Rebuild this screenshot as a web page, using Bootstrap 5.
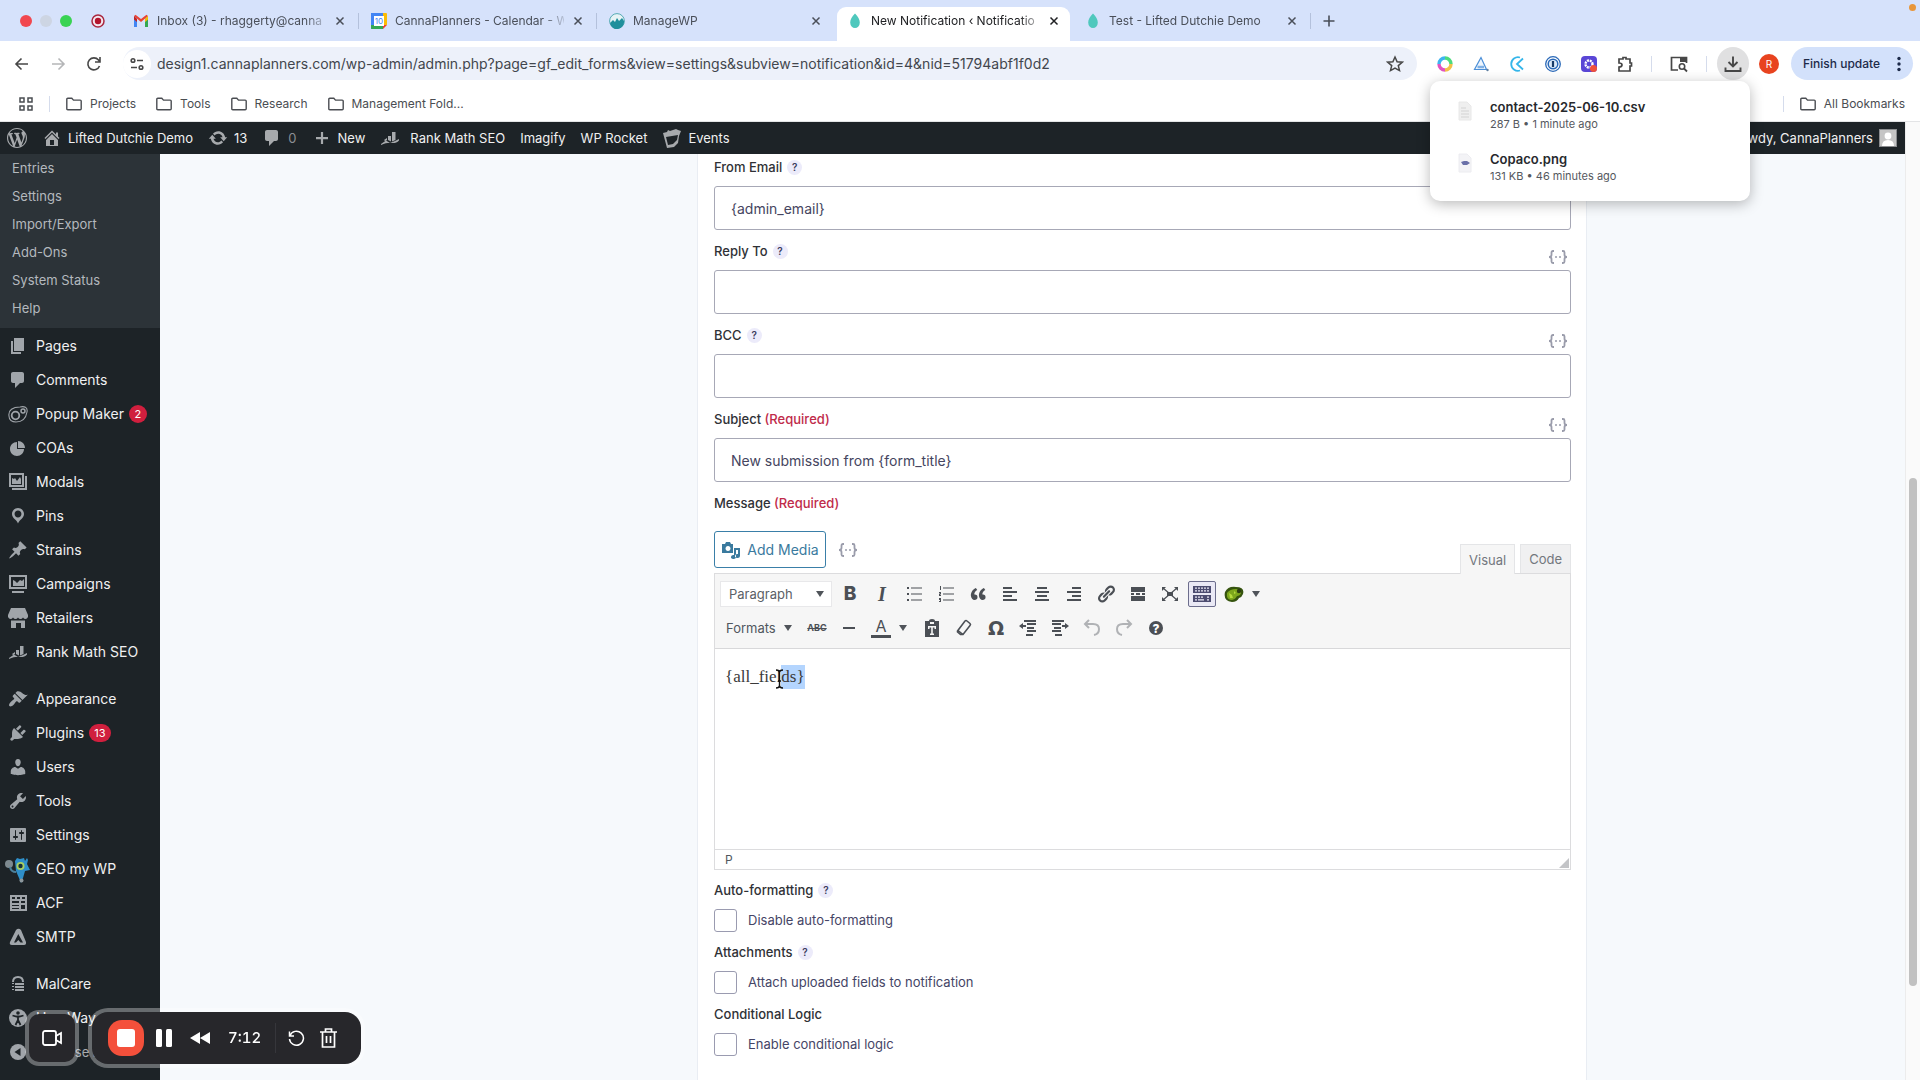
<!DOCTYPE html>
<html lang="en">
<head>
<meta charset="utf-8">
<meta name="viewport" content="width=device-width, initial-scale=1">
<title>New Notification ‹ Notifications</title>
<link href="https://cdn.jsdelivr.net/npm/bootstrap@5.3.0/dist/css/bootstrap.min.css" rel="stylesheet">
<style>
body{font-family:Inter,"Liberation Sans",sans-serif;font-size:13px;line-height:20px;color:#242748;height:100vh;overflow:hidden;background:#fff}
button{font:inherit;color:inherit;background:none;border:0;padding:0}
a{color:inherit;text-decoration:none}
svg{display:block;flex:none}
.ico{width:20px;height:20px;fill:currentColor}
.ln{fill:none;stroke:currentColor}
/* browser tabs */
.tabstrip{height:41px;background:#d6e2fb;padding-left:20px;color:#4a4f59;font-size:12px}
.lamp{width:12px;height:12px;border-radius:50%}
.wintab{width:238px;height:32px;margin-top:9px;padding:0 13px 8px 12px;gap:8px;position:relative}
.wintab::after{content:"";position:absolute;right:0;top:4px;height:16px;width:1px;background:#b4c1dc}
.wintab.nodiv::after{display:none}
.wintab .ttl{flex:1;min-width:0;white-space:nowrap;-webkit-mask-image:linear-gradient(90deg,#000 88%,rgba(0,0,0,.2))}
.wintab.current{z-index:1;color:#202124}
.wintab.current::before{content:"";position:absolute;z-index:-1;left:2px;right:3px;top:-2px;bottom:0;background:#fff;border-radius:9px 9px 0 0}
.tabclose{width:12px}
/* address bar */
.addr{height:47px;padding:6px 7px 8px 12px;color:#474747}
.omni{height:33px;background:#edf1fa;border-radius:17px;padding:0 13px 0 0}
.siteinfo{width:28px;height:28px;border-radius:50%;background:#fff;margin-right:6px}
.omni input{font-size:14px;color:#42464d;background:none;border:0;padding:0;min-width:0;outline:0}
.navico{width:20px}
.vr-s{width:1px;height:16px;background:#d5dcec}
.dl{width:32px;height:33px;border-radius:50%;background:#e0e0e1}
.who{width:20px;height:20px;border-radius:50%;background:#e8431f;color:#fff;font-size:10px}
.finish{height:33px;border-radius:17px;background:#d3e1fb;color:#1d2a49;padding:0 12px;font-weight:500;font-size:12px}
.bmarks{height:34px;padding:0 15px 1px 19px;color:#4a4d52;font-size:12px;border-bottom:1px solid #e3e4e6}
.bmarks a{gap:8px}
/* admin bar */
.abar{height:32px;background:#1d2327;color:#f0f0f1;padding:0 8px 0 7px}
.abar .ico{color:#a7aaad}
.abar a{display:flex;align-items:center;gap:6px;white-space:nowrap}
.avatar{width:18px;height:18px;background:#c5c5c5;border:1px solid #8a8c8f}
/* side menu */
.side{width:160px;background:#1d2327;color:#f0f0f1;font-size:14px}
.sub{background:#2c3338;color:#b4b9be;font-size:13px;height:174px}
.sub a{display:block;height:28px;line-height:28px;padding-left:12px}
.menu{padding-top:1px}
.menu a{display:flex;align-items:center;height:34px;padding-left:8px;gap:8px;white-space:nowrap}
.menu .ico{color:#a0a5aa}
.menu a.gap-top{margin-top:13px}
.count{background:#d01f3e;color:#fff;font-size:11px;line-height:18px;min-width:18px;border-radius:9px;padding:0 5px;text-align:center;margin-left:-3px}
/* form */
.stage{background:#f6f9fc}
.navcol{flex:0 0 537px}
.sheet{background:#fff;border:1px solid #e9edf3;border-width:0 1px;padding:0 15px 60px 16px;margin-right:318px;min-width:0}
.lab{font-weight:500;color:#2f3136;padding:11px 0 9px}
.first .lab{padding-top:3px}
.req{color:#c02b4a}
.tip{width:15px;height:15px;border-radius:50%;background:#ecebfa;color:#3b3b5c;font-size:10px;font-weight:600;line-height:15px;text-align:center;margin-left:5px}
.tip.far{margin-left:5px}
.mt{color:#9a9cab;margin:0 3px 6px 0}
.sheet input.form-control{height:44px;border:1px solid #a7a8b6;border-radius:3px;padding:0 16px;font-size:14px;color:#454560;box-shadow:none}
.media{width:112px;height:37px;border:1px solid #3a7fa8;border-radius:3px;color:#3a7a9e;font-size:14px;white-space:nowrap;gap:6px}
.edtab{height:29px;border:1px solid #e4e5e7;border-bottom:0;background:#f0f0f1;color:#73777d;padding:0 8px}
.edtab.on{background:#f6f6f6;height:30px;margin-bottom:-1px;z-index:1;position:relative}
.ed{border:1px solid #dcdcde}
.tools{background:#f6f6f6;border-bottom:1px solid #d8d8da;padding:7px 5px;color:#50575e}
.tools .rw{height:26px;gap:4px}
.tb{width:28px;height:26px;display:flex;align-items:center;justify-content:center;color:#4b4f55}
.tb.on{border:1px solid #6c6d8c;background:#eae9f5;border-radius:2px;color:#4c4c70}
.pick{width:112px;height:26px;background:#fff;border:1px solid #e8e8ea;color:#5b5f66;padding:0 7px 0 8px}
.pick select{appearance:none;border:0;background:none;color:inherit;font:inherit;padding:0;outline:0;width:100%}
.caret{width:0;height:0;border:4px solid transparent;border-top:6px solid #50545a;border-bottom:0;flex:none}
.bb{font-size:19px;font-weight:800}
.ii{font:italic 700 20px "Liberation Serif",serif}
.abc{font-size:9px;font-weight:700;text-decoration:line-through}
.aa{font-size:16px;line-height:17px;border-bottom:3px solid #4b4f55;width:20px}
.om{font:700 19px "DejaVu Sans",sans-serif}
.split{width:47px}
.page{height:200px;padding:16px 10px;font:17px/24px "Liberation Serif",serif;color:#3a3a3a;outline:0;position:relative}
.seld{background:#b4d5fe;display:inline-block}
.ibeam{position:absolute;left:60px;top:20px}
.stat{height:20px;border-top:1px solid #dcdcde;font-size:12px;line-height:19px;color:#50575e;padding-left:10px}
.chk .lab{padding:10px 0 8px}
.chk .form-check{height:24px;min-height:0;margin:0;padding:0;gap:11px;color:#454566}
.chk .form-check-input{width:23px;height:23px;margin:0;float:none;border:1px solid #9a9bb0;border-radius:3px}
.sbar{width:15px;background:#fafafa;border-left:1px solid #ececec;padding:356px 3px 0}
.thumb{height:508px;width:8px;border-radius:4px;background:#c1c1c1}
/* overlays */
.pop{position:absolute;right:170px;top:81px;width:320px;height:120px;background:#fff;border-radius:10px;box-shadow:0 3px 14px rgba(0,0,0,.28);padding:16px 26px;color:#27292d;z-index:5}
.pop .nm{font-size:13px;font-weight:600;line-height:20px}
.pop .dt{font-size:11px;line-height:15px;color:#55585e}
.pop .it{height:52px;gap:16px}
.rec{position:fixed;bottom:16px;height:52px;background:#27272b;color:#fff;box-shadow:0 0 0 4px rgba(255,255,255,.33);z-index:6}
.cam{left:29px;width:46px;height:48px;bottom:18px;border-radius:10px}
.deck{left:92px;width:269px;border-radius:16px;padding-left:16px}
.stop{width:36px;height:36px;border-radius:14px;background:#f4503b}
.stop i{width:18px;height:18px;border-radius:3px;background:#fff}
.clock{font-size:15px;font-weight:500;font-variant-numeric:tabular-nums}
</style>
</head>
<body class="d-flex flex-column">
<svg class="position-absolute" width="0" height="0">
<symbol id="x" viewBox="0 0 12 12"><path d="M2.500 2.500l7 7M9.500 2.500l-7 7" stroke="currentColor" stroke-width="1.500"/></symbol>
<symbol id="drop" viewBox="0 0 16 16"><path d="M8 .5C5 3.500 3.200 6.500 3.200 9.500a4.800 5.500 0 0 0 9.600 0C12.800 6.500 11 3.500 8 .5z" fill="#4fc8bd"/></symbol>
<symbol id="fold" viewBox="0 0 16 16"><path d="M.8 3.200q0-1 1-1h4l1.700 1.900h6.700q1 0 1 1v7.700q0 1-1 1H1.800q-1 0-1-1z" fill="none" stroke="currentColor" stroke-width="1.400"/></symbol>
<symbol id="rm" viewBox="0 0 20 20"><path d="M1 16l5-3.500 4 2.500 5-2 4-2v1.500c-1.500 2-4 2.500-6 2.500-4 0-7-.5-12 2zM4 12l3-2v2l-2 1zm4-4h3v5.500l-3-1.500zm4-4h3.500v8l-3.500 1.500z"/></symbol>
<symbol id="mtag" viewBox="0 0 20 14"><g fill="none" stroke="currentColor" stroke-width="1.800"><path d="M6 1H5Q3.500 1 3.500 2.500V5Q3.500 7 1 7q2.500 0 2.500 2v2.500Q3.500 13 5 13h1M14 1h1q1.500 0 1.500 1.500V5q0 2 2.500 2-2.500 0-2.500 2v2.500q0 1.500-1.500 1.500h-1"/></g><circle cx="8" cy="7" r="1" fill="currentColor"/><circle cx="12" cy="7" r="1" fill="currentColor"/></symbol>
<symbol id="cmt" viewBox="0 0 20 20"><path d="M5 2h9c1.100 0 2 .9 2 2v7c0 1.100-.9 2-2 2h-2l-5 5v-5H5c-1.100 0-2-.9-2-2V4c0-1.100.9-2 2-2z"/></symbol>
</svg>

<header>
<div class="tabstrip d-flex">
  <div class="d-flex align-items-center" style="width:101px">
    <span class="lamp me-2" style="background:#f1474f"></span><span class="lamp me-2" style="background:#cdd5e3"></span><span class="lamp" style="background:#39d353"></span>
    <svg class="ms-auto me-3" width="14" height="14" viewBox="0 0 14 14"><circle cx="7" cy="7" r="6" fill="#f3e8f0" stroke="#a9283f" stroke-width="1.500"/><circle cx="7" cy="7" r="3.200" fill="#b3142c"/></svg>
  </div>
  <div class="wintab d-flex align-items-center"><svg width="16" height="16" viewBox="0 0 16 16"><path d="M1 3v11h3V6z" fill="#4285f4"/><path d="M15 3v11h-3V6z" fill="#34a853"/><path d="M1 3l7 6 7-6-1.500-1.200L8 6 2.500 1.800z" fill="#ea4335"/><path d="M1 3l3 3v3L1 6.500z" fill="#c5221f"/><path d="M15 3l-3 3v3l3-2.500z" fill="#fbbc04"/></svg><span class="ttl">Inbox (3) - rhaggerty@canna</span><button class="tabclose" aria-label="Close"><svg width="12" height="12"><use href="#x"/></svg></button></div>
  <div class="wintab d-flex align-items-center"><svg width="16" height="16" viewBox="0 0 16 16"><path d="M0 0h12v4H4v12H0z" fill="#4285f4"/><path d="M12 0h3q1 0 1 1v11h-4z" fill="#fbbc04"/><path d="M0 12h12v4H1q-1 0-1-1z" fill="#34a853"/><path d="M12 12h4l-4 4z" fill="#ea4335"/><path d="M3 3h10v10H3z" fill="#fff"/><text x="8" y="11" font-size="8" text-anchor="middle" fill="#4285f4">10</text></svg><span class="ttl">CannaPlanners - Calendar - W</span><button class="tabclose" aria-label="Close"><svg width="12" height="12"><use href="#x"/></svg></button></div>
  <div class="wintab nodiv d-flex align-items-center"><svg width="16" height="16" viewBox="0 0 16 16"><circle cx="8" cy="8" r="7.400" fill="#e6f3f5" stroke="#55aab4"/><path d="M1 10l3-3 2 2 2-4 2 3 3-3 2 3a7 7 0 0 1-14 2z" fill="#1f8f9c"/></svg><span class="ttl">ManageWP</span><button class="tabclose" aria-label="Close"><svg width="12" height="12"><use href="#x"/></svg></button></div>
  <div class="wintab current nodiv d-flex align-items-center"><svg width="16" height="16"><use href="#drop"/></svg><span class="ttl">New Notification ‹ Notificatio</span><button class="tabclose" aria-label="Close"><svg width="12" height="12"><use href="#x"/></svg></button></div>
  <div class="wintab d-flex align-items-center"><svg width="16" height="16"><use href="#drop"/></svg><span class="ttl">Test - Lifted Dutchie Demo</span><button class="tabclose" aria-label="Close"><svg width="12" height="12"><use href="#x"/></svg></button></div>
  <button class="px-2 ms-1" aria-label="New tab"><svg width="12" height="12" viewBox="0 0 12 12"><path d="M6 .5v11M.5 6h11" stroke="currentColor" stroke-width="1.600"/></svg></button>
  <span class="ms-auto rounded-circle mt-1 me-1" style="width:7px;height:7px;background:#e8963a"></span>
</div>
<div class="addr d-flex align-items-center">
  <div class="d-flex align-items-center gap-3" style="width:111px">
    <button class="navico" aria-label="Back"><svg width="20" height="20" viewBox="0 0 20 20" class="ln" stroke-width="1.600"><path d="M16 10H4M9.500 4.500L4 10l5.500 5.500"/></svg></button>
    <button class="navico" style="color:#b5b6b8" aria-label="Forward"><svg width="20" height="20" viewBox="0 0 20 20" class="ln" stroke-width="1.600"><path d="M4 10h12M10.500 4.500L16 10l-5.500 5.500"/></svg></button>
    <button class="navico" aria-label="Reload"><svg width="20" height="20" viewBox="0 0 20 20" class="ln" stroke-width="1.600"><path d="M15.500 12A6 6 0 1 1 14.500 6l1 1.200M16 3v5h-5"/></svg></button>
  </div>
  <div class="omni d-flex align-items-center flex-grow-1">
    <span class="siteinfo d-flex align-items-center justify-content-center"><svg width="16" height="16" viewBox="0 0 16 16" class="ln" stroke-width="1.600"><circle cx="4" cy="4.500" r="1.800"/><path d="M8 4.500h6M2 11.500h6"/><circle cx="12" cy="11.500" r="1.800"/></svg></span>
    <input class="flex-grow-1" aria-label="Address" value="design1.cannaplanners.com/wp-admin/admin.php?page=gf_edit_forms&amp;view=settings&amp;subview=notification&amp;id=4&amp;nid=51794abf1f0d2">
    <button aria-label="Bookmark"><svg width="18" height="18" viewBox="0 0 18 18" class="ln" stroke-width="1.500"><path d="M9 2l2.100 4.700 5.100.5-3.900 3.400 1.200 5L9 13l-4.500 2.600 1.200-5L1.800 7.200l5.100-.5z"/></svg></button>
  </div>
  <div class="d-flex align-items-center" style="margin-left:20px;gap:20px">
    <svg width="16" height="16" viewBox="0 0 16 16" fill="none" stroke-width="3.400"><path d="M8 2a6 6 0 0 1 6 6" stroke="#4ddb7d"/><path d="M14 8a6 6 0 0 1-6 6" stroke="#f2c14a"/><path d="M8 14a6 6 0 0 1-6-6" stroke="#e254c0"/><path d="M2 8a6 6 0 0 1 6-6" stroke="#3eb4f0"/></svg>
    <svg width="16" height="16" viewBox="0 0 16 16"><path d="M8 1.500L1.500 13.500h12z" fill="#eef5fd" stroke="#4b8fd8" stroke-width="1.200"/><path d="M4.500 11h6.500" stroke="#7fb0e4" stroke-width="2.500"/><circle cx="14.500" cy="14" r="1.200" fill="#5f7fa0"/></svg>
    <svg width="16" height="16" viewBox="0 0 16 16" fill="none" stroke="#35b6ea" stroke-width="1.800"><path d="M11 1.500A6.800 6.800 0 1 0 11 14.500M14 2.500L8 8l6 5.500"/></svg>
    <svg width="16" height="16" viewBox="0 0 16 16"><circle cx="8" cy="8" r="7.300" fill="#fff" stroke="#2a69b8" stroke-width="1.300"/><circle cx="8" cy="8" r="4.800" fill="#dbe9f8" stroke="#2a69b8" stroke-width="1.500"/><path d="M8 5v6" stroke="#173a66" stroke-width="2.200"/></svg>
    <svg width="16" height="16" viewBox="0 0 16 16"><rect width="16" height="16" rx="4" fill="#5a46d6"/><circle cx="8" cy="8" r="3.500" fill="none" stroke="#fff" stroke-width="2.400" stroke-dasharray="2 .8"/><circle cx="12.500" cy="12.500" r="3.500" fill="#f0503c"/></svg>
    <svg width="16" height="16" viewBox="0 0 16 16" class="ln" stroke-width="1.700"><path d="M2 3h4V1.500h3V3h4v4h1.500v3H13v5H2v-4q3 0 3-2t-3-2z"/></svg>
  </div>
  <div class="d-flex align-items-center" style="margin-left:18px"><span class="vr-s"></span><svg style="margin:0 18px" width="18" height="18" viewBox="0 0 18 18"><path d="M8 15H1.500V2.500h15V8" fill="none" stroke="currentColor" stroke-width="1.700"/><path d="M10 2h7v5h-7z" fill="currentColor"/><circle cx="12" cy="11.500" r="2.700" fill="none" stroke="currentColor" stroke-width="1.600"/><path d="M14 13.500l3 3" stroke="currentColor" stroke-width="1.800"/></svg><span class="vr-s"></span></div>
  <button class="dl d-flex align-items-center justify-content-center" style="margin:0 10px" aria-label="Downloads"><svg width="18" height="18" viewBox="0 0 18 18" class="ln" stroke-width="1.900"><path d="M9 1.500v9.500M4.500 7L9 11.500 13.500 7M1.500 12.500v3.500h15v-3.500"/></svg></button>
  <span class="who d-flex align-items-center justify-content-center me-2">R</span>
  <button class="finish d-flex align-items-center justify-content-between text-nowrap" style="width:122px;margin-left:4px">Finish update<svg width="4" height="16" viewBox="0 0 4 16" fill="currentColor"><circle cx="2" cy="2.500" r="1.700"/><circle cx="2" cy="8" r="1.700"/><circle cx="2" cy="13.500" r="1.700"/></svg></button>
</div>
<nav class="bmarks d-flex align-items-center">
  <svg width="14" height="14" viewBox="0 0 14 14" class="ln" stroke-width="1.500"><path d="M1 1h4v4H1zM9 1h4v4H9zM1 9h4v4H1zM9 9h4v4H9z"/></svg>
  <span class="vr-s mx-3"></span>
  <div class="d-flex" style="gap:20px">
  <a href="#" class="d-flex align-items-center"><svg width="16" height="16"><use href="#fold"/></svg>Projects</a>
  <a href="#" class="d-flex align-items-center"><svg width="16" height="16"><use href="#fold"/></svg>Tools</a>
  <a href="#" class="d-flex align-items-center"><svg width="16" height="16"><use href="#fold"/></svg>Research</a>
  <a href="#" class="d-flex align-items-center"><svg width="16" height="16"><use href="#fold"/></svg>Management Fold...</a>
  </div>
  <span class="vr-s ms-auto me-3"></span>
  <a href="#" class="d-flex align-items-center"><svg width="16" height="16"><use href="#fold"/></svg>All Bookmarks</a>
</nav>
</header>

<div class="pop">
  <div class="it d-flex"><svg class="mt-1" width="18" height="20" viewBox="0 0 18 20"><path d="M3 1h8l4 4v14H3z" fill="#efefef" stroke="#e8e8e8"/><path d="M5 7h5M5 10h8M5 13h8M5 16h8" stroke="#d3d3d3"/></svg><div><div class="nm">contact-2025-06-10.csv</div><div class="dt">287 B • 1 minute ago</div></div></div>
  <div class="it d-flex"><svg class="mt-1" width="18" height="20" viewBox="0 0 18 20"><path d="M3 1h8l4 4v14H3z" fill="#f3f3f6" stroke="#ececf0"/><path d="M5 9l3-1h3l3 2-3 2H7z" fill="#6a70a8"/></svg><div><div class="nm">Copaco.png</div><div class="dt">131 KB • 46 minutes ago</div></div></div>
</div>

<div class="d-flex flex-grow-1 overflow-hidden">
<div class="d-flex flex-column flex-grow-1 overflow-hidden">
<nav class="abar d-flex align-items-center flex-shrink-0">
  <a href="#" aria-label="WordPress"><svg class="ico" viewBox="0 0 20 20"><path d="M20 10c0-5.510-4.490-10-10-10C4.480 0 0 4.490 0 10c0 5.520 4.480 10 10 10 5.510 0 10-4.480 10-10zM7.780 15.370L4.370 6.220c.55-.02 1.170-.08 1.170-.08.5-.06.44-1.130-.06-1.110 0 0-1.450.11-2.370.11-.18 0-.37 0-.58-.01C4.120 2.690 6.870 1.110 10 1.110c2.330 0 4.450.87 6.050 2.340-.68-.11-1.650.39-1.650 1.580 0 .74.45 1.360.9 2.100.35.61.55 1.360.55 2.460 0 1.490-1.400 5-1.400 5l-3.030-8.370c.54-.02.82-.17.82-.17.5-.05.44-1.250-.06-1.220 0 0-1.440.12-2.380.12-.87 0-2.330-.12-2.330-.12-.5-.03-.56 1.200-.06 1.220l.92.08 1.260 3.410zM17.410 10c.24-.64.74-1.870.43-4.250.7 1.290 1.050 2.710 1.050 4.250 0 3.290-1.730 6.240-4.400 7.780.97-2.590 1.940-5.200 2.920-7.780zM6.100 18.090C3.120 16.650 1.110 13.530 1.110 10c0-1.300.23-2.480.72-3.590C3.250 10.300 4.670 14.200 6.100 18.090zm4.030-6.630l2.580 6.980c-.86.29-1.760.45-2.710.45-.79 0-1.570-.11-2.290-.33.81-2.380 1.620-4.740 2.420-7.100z"/></svg></a>
  <div class="d-flex flex-grow-1" style="margin-left:15px;gap:15px">
  <a href="#"><svg class="ico" viewBox="0 0 20 20"><path d="M16 8.500l1.530 1.530-1.060 1.060L10 4.600l-6.470 6.490-1.060-1.060L10 2.500l4 4v-2h2v4zm-6-2.460l6 5.990V18H4v-5.970zM12 17v-5H8v5h4z" fill-rule="evenodd"/></svg>Lifted Dutchie Demo</a>
  <a href="#"><svg class="ico" viewBox="0 0 20 20"><path d="M10.200 3.280c3.530 0 6.430 2.610 6.920 6h2.080l-3.500 4-3.500-4h2.320c-.45-1.970-2.210-3.450-4.320-3.450-1.450 0-2.730.71-3.540 1.780L4.950 5.660C6.230 4.200 8.110 3.280 10.200 3.280zm-.4 13.440c-3.520 0-6.430-2.610-6.920-6H.8l3.500-4 3.500 4H5.480c.45 1.970 2.210 3.450 4.320 3.450 1.450 0 2.730-.71 3.540-1.780l1.710 1.950c-1.280 1.460-3.150 2.380-5.250 2.380z"/></svg>13</a>
  <a href="#" style="color:#8b8f94"><svg class="ico"><use href="#cmt"/></svg>0</a>
  <a href="#"><svg class="ico" viewBox="0 0 20 20"><path d="M16 9v2.200h-4.900V16H8.900v-4.800H4V9h4.900V4h2.200v5z"/></svg>New</a>
  <a href="#"><svg class="ico me-1"><use href="#rm"/></svg>Rank Math SEO</a>
  <a href="#">Imagify</a>
  <a href="#">WP Rocket</a>
  <a href="#"><svg class="ico" viewBox="0 0 20 20"><path d="M1 5l4-1 1-2 2 1 6-2 2 1 3 1-2 5-1 7-4 4-7 1zm3 4l2 8 5-1 4-4 1-5z" fill-rule="evenodd"/></svg>Events</a>
  </div>
  <a href="#">Howdy, CannaPlanners<span class="avatar"><svg width="16" height="16" viewBox="0 0 16 16" fill="#fff"><circle cx="8" cy="6" r="3.400"/><path d="M2 16q0-6 6-6t6 6z"/></svg></span></a>
</nav>
<div class="d-flex flex-grow-1 overflow-hidden">
<aside class="side flex-shrink-0">
  <div class="sub"><a href="#">Entries</a><a href="#">Settings</a><a href="#">Import/Export</a><a href="#">Add-Ons</a><a href="#">System Status</a><a href="#">Help</a></div>
  <nav class="menu">
  <a href="#"><svg class="ico" viewBox="0 0 20 20"><path d="M6 15V2h10v13H6zm-1 1h8v2H3V5h2v11z"/></svg>Pages</a>
  <a href="#"><svg class="ico"><use href="#cmt"/></svg>Comments</a>
  <a href="#"><svg class="ico ln" viewBox="0 0 20 20" stroke-width="1.100" style="fill:none"><path d="M1 12C0 6 5 3 12 3c4-1 8 0 7 5-1 6-5 10-11 10-4 0-7-2-7-6z"/><circle cx="7.500" cy="11.500" r="3.800" stroke-width="1.800"/><circle cx="15" cy="7" r="2" stroke-width="1.500"/></svg>Popup Maker<span class="count">2</span></a>
  <a href="#"><svg class="ico" viewBox="0 0 20 20"><path d="M10 10V3c3.870 0 7 3.130 7 7h-7zM9 4v7h7c0 3.870-3.130 7-7 7s-7-3.130-7-7 3.130-7 7-7z"/></svg>COAs</a>
  <a href="#"><svg class="ico" viewBox="0 0 20 20"><path d="M1 1h15v14H1zm2 2v10h11V3zM17 4h2v14H4v-2h13zM4 6l2 1 1-1 2 3 3-4 1 2v5H4z" fill-rule="evenodd"/></svg>Modals</a>
  <a href="#"><svg class="ico" viewBox="0 0 20 20"><path d="M10 2C6.690 2 4 4.690 4 8c0 2.020 1.170 3.710 2.530 4.890.43.37 1.180.96 1.850 1.830.74.97 1.410 2.010 1.620 2.710.21-.7.88-1.740 1.620-2.710.67-.87 1.420-1.460 1.850-1.830C14.830 11.710 16 10.020 16 8c0-3.310-2.690-6-6-6zm0 2.560c1.900 0 3.440 1.540 3.440 3.440S11.900 11.440 10 11.440 6.560 9.900 6.560 8 8.100 4.560 10 4.560z" fill-rule="evenodd"/></svg>Pins</a>
  <a href="#"><svg class="ico" viewBox="0 0 20 20"><path d="M10.440 3.020l1.820-1.820 6.360 6.350-1.830 1.820c-1.050-.68-2.480-.57-3.410.36l-.75.75c-.92.93-1.040 2.350-.35 3.410l-1.830 1.820-2.410-2.410-2.800 2.790c-.42.42-3.380 2.710-3.800 2.290s1.860-3.390 2.280-3.810l2.790-2.790L4.100 9.360l1.830-1.820c1.050.69 2.480.57 3.400-.36l.75-.75c.93-.92 1.050-2.350.36-3.410z"/></svg>Strains</a>
  <a href="#"><svg class="ico" viewBox="0 0 20 20"><path d="M1 1h18v14H1zm2 2v10h14V3zM4 17h12v2H4zM5 6l2 1 2 2 3-3 2 1 2-2v7H5z" fill-rule="evenodd"/></svg>Campaigns</a>
  <a href="#"><svg class="ico" viewBox="0 0 20 20"><path d="M3 0h14l3 7v2q-1 2-2.500 2T15 9.500Q14 11 12.500 11T10 9.500Q9 11 7.500 11T5 9.500Q4 11 2.500 11T0 9V7zM3 12.500h14V20h-4v-5H8v5H3z"/></svg>Retailers</a>
  <a href="#"><svg class="ico"><use href="#rm"/></svg>Rank Math SEO</a>
  <a href="#" class="gap-top"><svg class="ico" viewBox="0 0 20 20"><path d="M14.480 11.060L7.410 3.990l1.500-1.500c.5-.56 2.300-.47 3.510.32 1.210.8 1.430 1.280 2.910 2.100 1.180.64 2.450 1.260 4.450.85zm-.71.71L6.700 4.700 4.930 6.470c-.39.39-.39 1.020 0 1.410l1.060 1.060c.39.39.39 1.030 0 1.420-.6.6-1.430 1.110-2.210 1.690-.35.26-.7.53-1.010.84C1.430 14.230.4 16.080 1.400 17.070c.99 1 2.840-.03 4.180-1.360.31-.31.58-.66.85-1.020.57-.78 1.080-1.610 1.690-2.210.39-.39 1.020-.39 1.410 0l1.060 1.060c.39.39 1.020.39 1.410 0z"/></svg>Appearance</a>
  <a href="#"><svg class="ico" viewBox="0 0 20 20"><path d="M13.110 4.360L9.870 7.600 8 5.730l3.240-3.240c.35-.34 1.050-.2 1.560.32.52.51.66 1.210.31 1.550zm-8 1.770l.91-1.120 9.010 9.010-1.190.84c-.71.71-2.630 1.160-3.820 1.160H6.140L4.900 17.260c-.59.59-1.540.59-2.120 0-.59-.58-.59-1.530 0-2.120l1.240-1.240v-3.880c0-1.130.4-3.190 1.090-3.890zm7.260 3.970l3.240-3.240c.34-.35 1.040-.21 1.550.31.52.51.66 1.210.31 1.550l-3.240 3.250z"/></svg>Plugins<span class="count">13</span></a>
  <a href="#"><svg class="ico" viewBox="0 0 20 20"><path d="M10 9.250c-2.270 0-2.730-3.440-2.730-3.440C7 4.020 7.820 2 9.970 2c2.160 0 2.980 2.020 2.710 3.810 0 0-.41 3.440-2.680 3.440zm0 2.570L12.720 10c2.390 0 4.520 2.330 4.520 4.530v2.490s-3.650 1.130-7.240 1.130c-3.650 0-7.240-1.130-7.240-1.130v-2.490c0-2.250 1.940-4.480 4.470-4.480z"/></svg>Users</a>
  <a href="#"><svg class="ico" viewBox="0 0 20 20"><path d="M16.680 9.770c-1.340 1.340-3.300 1.670-4.950.99l-5.410 6.520c-.99.99-2.590.99-3.580 0s-.99-2.590 0-3.570l6.520-5.420c-.68-1.650-.35-3.610.99-4.950 1.280-1.280 3.120-1.620 4.720-1.060l-2.890 2.890 2.820 2.820 2.860-2.870c.53 1.580.18 3.390-1.080 4.650zM3.810 16.210c.4.39 1.040.39 1.430 0 .4-.4.4-1.040 0-1.430-.39-.4-1.030-.4-1.430 0-.39.39-.39 1.030 0 1.430z" fill-rule="evenodd"/></svg>Tools</a>
  <a href="#"><svg class="ico" viewBox="0 0 20 20"><path fill-rule="evenodd" d="M18 16V4c0-.55-.45-1-1-1H3c-.55 0-1 .45-1 1v12c0 .55.45 1 1 1h14c.55 0 1-.45 1-1zM8 11h1c.55 0 1 .45 1 1s-.45 1-1 1H8v1.500c0 .28-.22.5-.5.5s-.5-.22-.5-.5V13H6c-.55 0-1-.45-1-1s.45-1 1-1h1V5.500c0-.28.22-.5.5-.5s.5.22.5.5V11zm5-2h-1c-.55 0-1-.45-1-1s.45-1 1-1h1V5.500c0-.28.22-.5.5-.5s.5.22.5.5V7h1c.55 0 1 .45 1 1s-.45 1-1 1h-1v5.500c0 .28-.22.5-.5.5s-.5-.22-.5-.5V9z"/></svg>Settings</a>
  <a href="#"><svg class="ico" style="overflow:visible" viewBox="0 0 20 20"><circle cx="1" cy="5" r="4" fill="#7e8a90"/><path d="M2 8q1 5 6 5" fill="none" stroke="#4c7f99" stroke-width="2"/><path d="M7 2l2-3 3 1 4-1 1 3 2-3 1 2-1 4 3 6-5 1-2 7-2 5-2-5-3-7z" fill="#2f8fc9"/><circle cx="12.500" cy="7" r="4" fill="#a9cf62"/><circle cx="12.500" cy="7" r="2.200" fill="#16313f"/><circle cx="13.500" cy="21.500" r="2" fill="#8d979c"/></svg>GEO my WP</a>
  <a href="#"><svg class="ico" viewBox="0 0 20 20"><path d="M2 2h17v16H2zm2 2v2h3V4zm5 0v2h3V4zm5 0v2h3V4zM4 8v2h7V8zm0 4v1h7v-1zm0 3v1h7v-1zm9-7v2h4V8zm0 4v4h4v-4z" fill-rule="evenodd"/></svg>ACF</a>
  <a href="#"><svg class="ico" viewBox="0 0 20 20"><path d="M8 3q2.500-2.500 5 0l5 12q.5 3-2 3H4q-3 0-2-3zm2.300 4L6 15.500h2l2.300-2.500 2.200 2.500H15z" fill-rule="evenodd"/></svg>SMTP</a>
  <a href="#" class="gap-top"><svg class="ico" viewBox="0 0 20 20"><path d="M4 8q0-6 6-6t6 6h-2q0-4-4-4T6 8zM7 9h9v2H7zm0 3h9v2H7zm0 3h9v2H7zM4 9h2v1H4zm0 3h2v1H4zm0 3h2v1H4z"/></svg>MalCare</a>
  <a href="#"><svg class="ico" viewBox="0 0 20 20"><circle cx="10" cy="10" r="9"/><g stroke="#1d2327" stroke-width="1.800" fill="none"><path d="M4.500 7.500l4 1h3l4-1M10 9v3l-2.500 5M10 12l2.500 5"/></g><circle cx="10" cy="5" r="1.800" fill="#1d2327"/></svg>UserWay</a>
  <a href="#" style="font-size:13px;color:#a7aaad"><svg class="ico" viewBox="0 0 20 20"><circle cx="10" cy="10" r="8"/><path d="M12.500 6v8l-6-4z" fill="#1d2327"/></svg>Collapse menu</a>
  </nav>
</aside>

<main class="stage d-flex flex-grow-1 align-items-start overflow-hidden">
<div class="navcol"></div>
<form class="sheet flex-grow-1" onsubmit="return false">
  <div class="first">
    <div class="d-flex align-items-center"><label class="lab d-flex align-items-center" for="f1">From Email<span class="tip">?</span></label></div>
    <input class="form-control" id="f1" value="{admin_email}">
  </div>
  <div>
    <div class="d-flex align-items-end justify-content-between"><label class="lab d-flex align-items-center" for="f2">Reply To<span class="tip">?</span></label><button class="mt" aria-label="Merge tags"><svg width="20" height="14"><use href="#mtag"/></svg></button></div>
    <input class="form-control" id="f2">
  </div>
  <div>
    <div class="d-flex align-items-end justify-content-between"><label class="lab d-flex align-items-center" for="f3">BCC<span class="tip">?</span></label><button class="mt" aria-label="Merge tags"><svg width="20" height="14"><use href="#mtag"/></svg></button></div>
    <input class="form-control" id="f3">
  </div>
  <div>
    <div class="d-flex align-items-end justify-content-between"><label class="lab" for="f4">Subject <span class="req">(Required)</span></label><button class="mt" aria-label="Merge tags"><svg width="20" height="14"><use href="#mtag"/></svg></button></div>
    <input class="form-control" id="f4" value="New submission from {form_title}">
  </div>
  <div class="lab" id="msg">Message <span class="req">(Required)</span></div>
  <div class="d-flex align-items-end" style="height:51px">
    <div class="d-flex align-items-center" style="margin-bottom:5px">
      <button class="media d-flex align-items-center justify-content-center"><svg class="ico" viewBox="0 0 20 20"><path d="M1 4h3l1-2h4l1 2h2v9H1zm6 2a2.500 2.500 0 1 0 .01 0zM13 8h6v8a2.500 2 0 1 1-2-2v-4h-2v7a2.500 2 0 1 1-2-2z" fill-rule="evenodd"/></svg>Add Media</button>
      <button class="ms-2 ps-1" aria-label="Merge tags" style="color:#9a9cab"><svg width="20" height="14"><use href="#mtag"/></svg></button>
    </div>
    <div class="d-flex align-items-end ms-auto" style="gap:5px"><button class="edtab on">Visual</button><button class="edtab">Code</button></div>
  </div>
  <div class="ed">
    <div class="tools">
      <div class="rw d-flex mb-2">
        <div class="pick d-flex align-items-center"><select aria-label="Block format"><option>Paragraph</option></select><span class="caret"></span></div>
        <button class="tb bb">B</button>
        <button class="tb ii">I</button>
        <button class="tb" aria-label="Bulleted list"><svg class="ico" viewBox="0 0 20 20"><path d="M3 3h2v2H3zm0 6h2v2H3zm0 6h2v2H3zM7 3.500h11v1H7zm0 6h11v1H7zm0 6h11v1H7z"/></svg></button>
        <button class="tb" aria-label="Numbered list"><svg class="ico" viewBox="0 0 20 20"><path d="M7 3.500h11v1H7zm0 6h11v1H7zm0 6h11v1H7zM4 2h1v4H4zm-1 6h2v2l-1 1h1v1H3v-2l1-1H3zm0 6h2v4H3v-1h1v-1H3z"/></svg></button>
        <button class="tb" aria-label="Quote"><svg class="ico" viewBox="0 0 20 20"><path d="M9.490 13.220c0-.74-.2-1.380-.61-1.900-.62-.78-1.830-.88-2.530-.72-.29-1.650 1.110-3.750 2.920-4.650L7.880 4c-2.730 1.300-5.420 4.280-4.960 8.050C3.210 14.430 4.590 16 6.540 16c.85 0 1.560-.25 2.120-.75s.83-1.180.83-2.030zm8.050 0c0-.74-.2-1.380-.61-1.900-.63-.78-1.830-.88-2.530-.72-.29-1.650 1.110-3.750 2.920-4.650L15.930 4c-2.730 1.300-5.410 4.280-4.950 8.050.29 2.380 1.660 3.950 3.610 3.950.85 0 1.560-.25 2.120-.75s.83-1.180.83-2.030z"/></svg></button>
        <button class="tb" aria-label="Align left"><svg class="ico" viewBox="0 0 20 20"><path d="M3 3h9v2H3zm0 4h14v2H3zm0 4h9v2H3zm0 4h14v2H3z"/></svg></button>
        <button class="tb" aria-label="Align center"><svg class="ico" viewBox="0 0 20 20"><path d="M5 3h10v2H5zM3 7h14v2H3zm2 4h10v2H5zm-2 4h14v2H3z"/></svg></button>
        <button class="tb" aria-label="Align right"><svg class="ico" viewBox="0 0 20 20"><path d="M8 3h9v2H8zM3 7h14v2H3zm5 4h9v2H8zm-5 4h14v2H3z"/></svg></button>
        <button class="tb" aria-label="Link"><svg class="ico" viewBox="0 0 20 20"><path d="M17.740 2.760c1.680 1.690 1.680 4.410 0 6.100l-1.530 1.520c-1.120 1.120-2.700 1.470-4.140 1.090l2.620-2.610.76-.77.76-.76c.84-.84.84-2.200 0-3.040-.84-.85-2.200-.85-3.040 0l-.77.76-3.380 3.380c-.37-1.440-.02-3.020 1.100-4.140l1.520-1.530c1.690-1.680 4.420-1.680 6.100 0zM8.590 13.430l5.340-5.340c.42-.42.42-1.100 0-1.520-.44-.43-1.130-.39-1.530 0l-5.330 5.340c-.42.42-.42 1.100 0 1.520.44.43 1.130.39 1.520 0zm-.76 2.290l4.140-4.150c.38 1.440.03 3.020-1.090 4.140l-1.520 1.530c-1.690 1.680-4.410 1.680-6.100 0-1.680-1.680-1.680-4.420 0-6.100l1.530-1.520c1.120-1.120 2.700-1.470 4.140-1.100l-4.140 4.150c-.85.84-.85 2.200 0 3.050.84.84 2.200.84 3.040 0z"/></svg></button>
        <button class="tb" aria-label="Read more"><svg class="ico" viewBox="0 0 20 20"><path d="M3 3h14v5H3zm0 6h3v2H3zm5 0h4v2H8zm6 0h3v2h-3zM3 12h14v5H3z"/></svg></button>
        <button class="tb" aria-label="Fullscreen"><svg class="ico" viewBox="0 0 20 20"><path d="M2 3h4L2 7zM18 3h-4l4 4zM2 17h4l-4-4zm16 0h-4l4-4zM7 8h6v4H7z"/><path d="M3 4l14 12M17 4L3 16" stroke="currentColor" stroke-width="1.200"/></svg></button>
        <button class="tb on" aria-label="Toolbar toggle"><svg class="ico" viewBox="0 0 20 20"><path d="M1 2h18v7H1zm2 1.500v1.200h2V3.500zm3 0v1.200h2V3.500zm3 0v1.200h2V3.500zm3 0v1.200h2V3.500zm3 0v1.200h2V3.500zM3 6.300v1.200h2V6.300zm3 0v1.200h2V6.300zm3 0v1.200h2V6.300zm3 0v1.200h2V6.300zm3 0v1.200h2V6.300zM1 11h18v7H1zm2 1.500v1.200h2v-1.200zm3 0v1.200h2v-1.200zm3 0v1.200h2v-1.200zm6 0v1.200h2v-1.200zM3 15.300v1.200h2v-1.200zm3 0v1.200h6v-1.200zm9 0v1.200h2v-1.200z" fill-rule="evenodd"/></svg></button>
        <button class="tb" aria-label="Plugin"><svg width="20" height="20" viewBox="0 0 20 20"><path d="M1 8q3-6 11-5 9 0 7 7-1 3-4 4-2 4-7 4Q-1 17 1 8z" fill="#36540f"/><path d="M3 9q3-4 9-4 6 0 5 4-1 3-4 3-2 4-6 4-5-1-4-7z" fill="#7da71c"/><path d="M5 9l3 2 1 3-3 0zM10 7l2 2-2 1z" fill="#b5dc3c"/><circle cx="15" cy="7" r="2.200" fill="#2b3d12"/></svg></button><span class="caret align-self-center"></span>
      </div>
      <div class="rw d-flex">
        <button class="d-flex align-items-center" style="width:79px;padding-left:6px;gap:8px">Formats<span class="caret"></span></button>
        <button class="tb abc">ABC</button>
        <button class="tb" aria-label="Rule"><svg class="ico" viewBox="0 0 20 20"><path d="M4 9h12v2H4z"/></svg></button>
        <div class="split d-flex align-items-center"><button class="tb"><span class="aa">A</span></button><span class="caret ms-1"></span></div>
        <button class="tb" aria-label="Paste as text"><svg class="ico" viewBox="0 0 20 20"><path d="M3 3h4q0-2 3-2t3 2h4v16H3zm3 5v3h1.500V9.500h1.700v6H8V17h4v-1.500h-1.200v-6h1.700V11H14V8zm2-4v2h4V4z" fill-rule="evenodd"/></svg></button>
        <button class="tb" aria-label="Clear formatting"><svg class="ico ln" style="fill:none" viewBox="0 0 20 20" stroke-width="1.600"><path d="M3.500 13L11 3q1-1 2 0l3 2.500q1 1 0 2L9 16.500H6.500L3.500 14zM4 12.500l5 4"/></svg></button>
        <button class="tb om">Ω</button>
        <button class="tb" aria-label="Outdent"><svg class="ico" viewBox="0 0 20 20"><path d="M6 2h12v2H6zm3 3h9v2H9zm0 4h7v2H9zm0 3h9v2H9zm-1 4h7v2H8zM1 8l4-3v2h3v2H5v2z"/></svg></button>
        <button class="tb" aria-label="Indent"><svg class="ico" viewBox="0 0 20 20"><path d="M2 2h12v2H2zm0 3h9v2H2zm2 4h7v2H4zm-2 3h9v2H2zm3 4h7v2H5zM15 5l4 3-4 3V9h-3V7h3z"/></svg></button>
        <button class="tb" style="color:#b0b2b5" aria-label="Undo"><svg class="ico ln" style="fill:none" viewBox="0 0 20 20" stroke-width="2"><path d="M7 2L3 6l4 4M3 6h8q6 0 6 5t-5 6"/></svg></button>
        <button class="tb" style="color:#b0b2b5" aria-label="Redo"><svg class="ico ln" style="fill:none" viewBox="0 0 20 20" stroke-width="2"><path d="M13 2l4 4-4 4M17 6H9q-6 0-6 5t5 6"/></svg></button>
        <button class="tb" aria-label="Help"><svg class="ico" viewBox="0 0 20 20"><circle cx="10" cy="10" r="7"/><text x="10" y="14.500" font-size="12" font-weight="800" text-anchor="middle" fill="#fff">?</text></svg></button>
      </div>
    </div>
    <div class="page" contenteditable="true" role="textbox" aria-labelledby="msg">{all_fiel<span class="seld">ds}</span><svg class="ibeam" width="9" height="20" viewBox="0 0 9 20" fill="none" stroke="#111" stroke-width="1.400"><path d="M1 1q3.500 0 3.500 2.500v13Q4.500 19 1 19M8 1Q4.500 1 4.500 3.500M4.500 16.500Q4.500 19 8 19M3 12h3"/></svg></div>
    <div class="stat d-flex justify-content-between">P<svg class="align-self-end" width="12" height="12" viewBox="0 0 12 12"><path d="M11 1v10H1z" fill="#c3c4c7"/></svg></div>
  </div>
  <div class="chk"><div class="lab d-flex align-items-center">Auto-formatting<span class="tip">?</span></div><div class="form-check d-flex align-items-center"><input class="form-check-input" type="checkbox" id="c1"><label for="c1">Disable auto-formatting</label></div></div>
  <div class="chk"><div class="lab d-flex align-items-center">Attachments<span class="tip">?</span></div><div class="form-check d-flex align-items-center"><input class="form-check-input" type="checkbox" id="c2"><label for="c2">Attach uploaded fields to notification</label></div></div>
  <div class="chk"><div class="lab">Conditional Logic</div><div class="form-check d-flex align-items-center"><input class="form-check-input" type="checkbox" id="c3"><label for="c3">Enable conditional logic</label></div></div>
</form>
</main>
</div>
</div>
<div class="sbar flex-shrink-0"><div class="thumb"></div></div>
</div>

<div class="rec cam d-flex align-items-center justify-content-center"><svg width="20" height="16" viewBox="0 0 20 16" fill="none" stroke="#fff" stroke-width="1.800"><rect x="1" y="1" width="13" height="14" rx="2"/><path d="M14 6l5-3v10l-5-3z"/></svg></div>
<div class="rec deck d-flex align-items-center">
  <button class="stop d-flex align-items-center justify-content-center" aria-label="Stop"><i></i></button>
  <button style="margin-left:12px" aria-label="Pause"><svg width="16" height="18" viewBox="0 0 16 18" fill="#fff"><rect width="6" height="18" rx="1.500"/><rect x="10" width="6" height="18" rx="1.500"/></svg></button>
  <button style="margin-left:18px" aria-label="Rewind"><svg width="20" height="12" viewBox="0 0 20 12" fill="#fff"><path d="M10 0v12L0 6zM20 0v12L10 6z"/></svg></button>
  <span class="clock" style="margin-left:18px">7:12</span>
  <span style="width:1px;height:30px;background:#36363b;margin:0 12px 0 auto"></span>
  <button aria-label="Restart"><svg width="17" height="17" viewBox="0 0 17 17" fill="none" stroke="#fff" stroke-width="1.500"><path d="M2 5.500A7 7 0 1 1 1.500 9M1.500 1.500v4.500H6"/></svg></button>
  <button style="margin:0 24px 0 15px" aria-label="Delete"><svg width="17" height="20" viewBox="0 0 17 20" fill="none" stroke="#fff" stroke-width="1.700"><path d="M0 4h17M5.500 4V1h6v3M2.500 4v15h12V4M6.500 8v7M10.500 8v7"/></svg></button>
</div>
<script src="https://cdn.jsdelivr.net/npm/bootstrap@5.3.0/dist/js/bootstrap.bundle.min.js"></script>
</body>
</html>
